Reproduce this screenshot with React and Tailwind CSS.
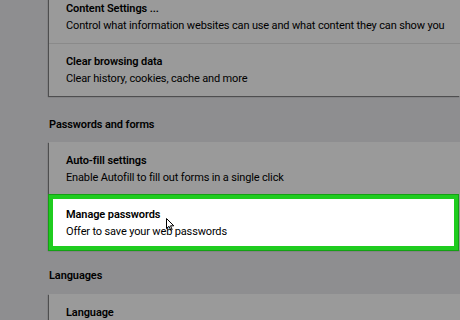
const Row = ({ title, text, divider }) => (
  <div className={`flex h-[53px] flex-col justify-center pl-[17px] ${divider ? "border-t border-[#8a8a8a]" : ""}`}>
    <div className="text-[11px] font-semibold leading-[17px] tracking-[-0.1px] text-black">{title}</div>
    <div className="text-[11px] leading-[17px] tracking-[-0.15px] text-black">{text}</div>
  </div>
);

const Card = ({ children, className = "" }) => (
  <div className={`bg-[#9a9a9a] shadow-[-1px_1px_1px_rgba(0,0,0,0.45)] ${className}`}>{children}</div>
);

const Heading = ({ children, className = "" }) => (
  <div className={`text-[11px] font-semibold leading-[17px] tracking-[-0.1px] text-black ${className}`}>{children}</div>
);

const Cursor = () => (
  <svg className="absolute left-[100px] top-[12px]" width="9" height="13" viewBox="0 0 9 13">
    <path d="M0.5 0.5 L0.5 10.5 L3 8.3 L4.8 12.2 L6.2 11.6 L4.5 7.8 L7.8 7.8 Z" fill="white" stroke="black" strokeWidth="1" strokeLinejoin="round" />
  </svg>
);

export default function App() {
  return (
    <div className="h-[320px] w-[460px] overflow-hidden bg-[#8e8e90] pl-[49px]" style={{ fontFamily: "Roboto, 'Liberation Sans', sans-serif" }}>
      <Card className="-mt-[10px]">
        <Row title="Content Settings ..." text="Control what information websites can use and what content they can show you" />
        <Row divider title="Clear browsing data" text="Clear history, cookies, cache and more" />
      </Card>
      <Heading className="h-[46px] pt-[20px]">Passwords and forms</Heading>
      <Card>
        <Row title="Auto-fill settings" text="Enable Autofill to fill out forms in a single click" />
        <div className="mr-[2px] border-[4px] border-[#1fcc1f] bg-white outline outline-1 outline-[#14a014]">
          <div className="flex h-[47px] flex-col justify-center pl-[13px]">
            <div className="relative text-[11px] font-semibold leading-[17px] tracking-[-0.1px] text-black">
              Manage passwords
              <Cursor />
            </div>
            <div className="text-[11px] leading-[17px] tracking-[-0.15px] text-black">Offer to save your web passwords</div>
          </div>
        </div>
      </Card>
      <Heading className="h-[44px] pt-[17px]">Languages</Heading>
      <Card>
        <Row title="Language" text="English" />
      </Card>
    </div>
  );
}
